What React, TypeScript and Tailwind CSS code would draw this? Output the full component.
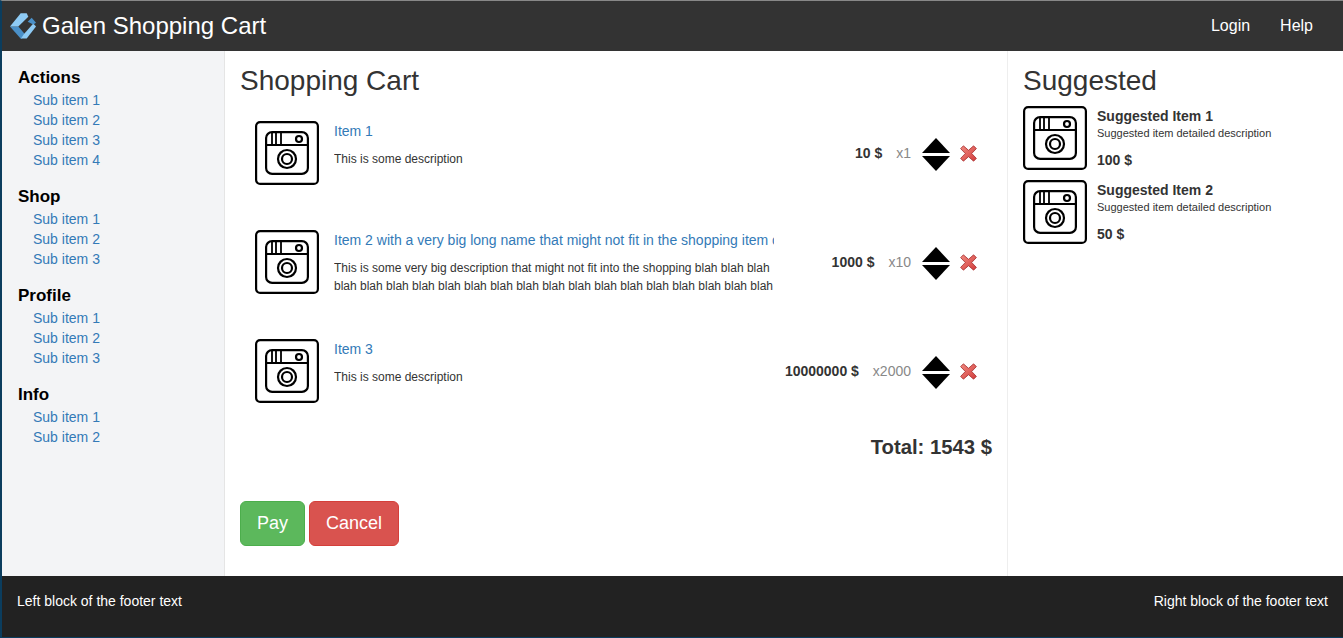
import React from 'react';

const menus = [
  { title: 'Actions', items: ['Sub item 1', 'Sub item 2', 'Sub item 3', 'Sub item 4'] },
  { title: 'Shop', items: ['Sub item 1', 'Sub item 2', 'Sub item 3'] },
  { title: 'Profile', items: ['Sub item 1', 'Sub item 2', 'Sub item 3'] },
  { title: 'Info', items: ['Sub item 1', 'Sub item 2'] },
];

const cartItems = [
  {
    name: 'Item 1',
    description: 'This is some description',
    price: '10 $',
    amount: 'x1',
  },
  {
    name: 'Item 2 with a very big long name that might not fit in the shopping item container',
    description:
      'This is some very big description that might not fit into the shopping blah blah blah blah blah blah blah blah blah blah blah blah blah blah blah blah blah blah blah blah blah blah blah blah blah blah blah',
    price: '1000 $',
    amount: 'x10',
  },
  {
    name: 'Item 3',
    description: 'This is some description',
    price: '10000000 $',
    amount: 'x2000',
  },
];

const suggested = [
  { name: 'Suggested Item 1', price: '100 $' },
  { name: 'Suggested Item 2', price: '50 $' },
];

function ProductImage() {
  return (
    <svg width="64" height="64" viewBox="0 0 64 64" className="block shrink-0" fill="none" stroke="#000" strokeWidth="2.2">
      <rect x="1.1" y="1.1" width="61.8" height="61.8" rx="4" />
      <rect x="11.1" y="11.1" width="41.8" height="41.8" rx="6" />
      <path d="M11 24H53" />
      <path d="M17 11V24M21 11V24M26 11V24" strokeWidth="1.8" />
      <circle cx="44" cy="18" r="3" />
      <circle cx="32" cy="38" r="9" />
      <circle cx="32" cy="38" r="5" />
    </svg>
  );
}

function Logo() {
  return (
    <svg width="28" height="28" viewBox="0 0 28 28" className="block">
      <path d="M1 14.5H9.3L17 23.5L12 27Z" fill="#4a90c8" />
      <path d="M11.7 1.3H17.7L19.3 4.7L9.3 14.5H1Z" fill="#8ecbf5" />
      <path d="M15 22L24.3 11.5L27 14.5L17.7 26.5H12Z" fill="#8ecbf5" />
      <path d="M18.7 9.7L22.7 5.7L27 10.7L24.3 12.5Z" fill="#4a90c8" />
    </svg>
  );
}

function Stepper() {
  return (
    <div className="flex flex-col items-center w-[28px] mt-[2px]">
      <div className="w-0 h-0 border-x-[14px] border-x-transparent border-b-[15px] border-b-black" />
      <div className="h-[3px]" />
      <div className="w-0 h-0 border-x-[14px] border-x-transparent border-t-[15px] border-t-black" />
    </div>
  );
}

function DeleteIcon() {
  return (
    <svg width="17" height="17" viewBox="0 0 16 16" className="block">
      <defs>
        <linearGradient id="deleteFill" x1="0" y1="0" x2="1" y2="1">
          <stop offset="0" stopColor="#f08a80" />
          <stop offset="1" stopColor="#d23c3c" />
        </linearGradient>
      </defs>
      <path
        d="M3.2 .8L8 5L12.8 .8L15.4 3.4L11 8L15.4 12.6L12.8 15.2L8 11L3.2 15.2L.6 12.6L5 8L.6 3.4Z"
        fill="url(#deleteFill)"
        stroke="#a83232"
        strokeWidth="0.8"
      />
    </svg>
  );
}

export default function App() {
  return (
    <div className="h-[638px] flex flex-col bg-white border-l-2 border-l-[#0b3d5e] border-t border-t-[#888] border-b border-b-[#0b3d5e] overflow-hidden text-[14px] leading-[20px] text-[#333] font-['Liberation_Sans',Arial,sans-serif]">
      <header className="h-[50px] shrink-0 bg-[#333] text-white flex items-center">
        <div className="pl-[7px] flex items-center gap-[5px]">
          <Logo />
          <span className="text-[24px]">Galen Shopping Cart</span>
        </div>
        <nav className="ml-auto flex gap-[30px] pr-[30px] text-[16px]">
          <span>Login</span>
          <span>Help</span>
        </nav>
      </header>

      <div className="flex-1 flex min-h-0">
        <aside className="w-[223px] shrink-0 bg-[#f3f4f6] border-r border-r-[#e5e5e5] pl-[16px] pt-[17px]">
          {menus.map((menu) => (
            <div key={menu.title} className="mb-[17px]">
              <div className="text-[17px] font-bold text-black leading-[20px] mb-[2px]">{menu.title}</div>
              <ul>
                {menu.items.map((item) => (
                  <li key={item} className="pl-[15px] text-[#337ab7]">{item}</li>
                ))}
              </ul>
            </div>
          ))}
        </aside>

        <main className="flex-1 min-w-0 border-r border-r-[#eee] px-[15px] pt-[13px]">
          <h2 className="text-[28px] leading-[34px]">Shopping Cart</h2>
          <div className="mt-[23px] flex flex-col gap-[45px] pl-[15px] pr-[15px]">
            {cartItems.map((item) => (
              <div key={item.name} className="flex h-[64px]">
                <ProductImage />
                <div className="w-[440px] ml-[15px] overflow-hidden">
                  <div className="whitespace-nowrap text-[#337ab7] mb-[9px]">{item.name}</div>
                  <p className="text-[12px] leading-[18px]">{item.description}</p>
                </div>
                <div className="ml-auto flex items-center">
                  <span className="font-bold">{item.price}</span>
                  <span className="ml-[14px] text-[#888]">{item.amount}</span>
                  <span className="ml-[11px]"><Stepper /></span>
                  <span className="ml-[10px]"><DeleteIcon /></span>
                </div>
              </div>
            ))}
          </div>
          <div className="mt-[32px] text-right text-[20.3px] font-bold leading-[24px]">Total: 1543 $</div>
          <div className="mt-[42px] flex gap-[4px]">
            <button className="h-[45px] px-[16px] pb-[2px] rounded-[6px] bg-[#5cb85c] border border-[#4cae4c] text-white text-[18px]">Pay</button>
            <button className="h-[45px] px-[16px] pb-[2px] rounded-[6px] bg-[#d9534f] border border-[#d43f3a] text-white text-[18px]">Cancel</button>
          </div>
        </main>

        <aside className="w-[335px] shrink-0 pl-[15px] pt-[13px]">
          <h2 className="text-[28px] leading-[34px]">Suggested</h2>
          <div className="mt-[8px] flex flex-col gap-[10px]">
            {suggested.map((item) => (
              <div key={item.name} className="flex gap-[10px] h-[64px]">
                <ProductImage />
                <div>
                  <div className="font-bold">{item.name}</div>
                  <div className="text-[11px] leading-[14px]">Suggested item detailed description</div>
                  <div className="font-bold mt-[10px]">{item.price}</div>
                </div>
              </div>
            ))}
          </div>
        </aside>
      </div>

      <footer className="h-[61px] shrink-0 bg-[#222] text-white flex justify-between px-[15px] pt-[15px]">
        <span>Left block of the footer text</span>
        <span>Right block of the footer text</span>
      </footer>
    </div>
  );
}
